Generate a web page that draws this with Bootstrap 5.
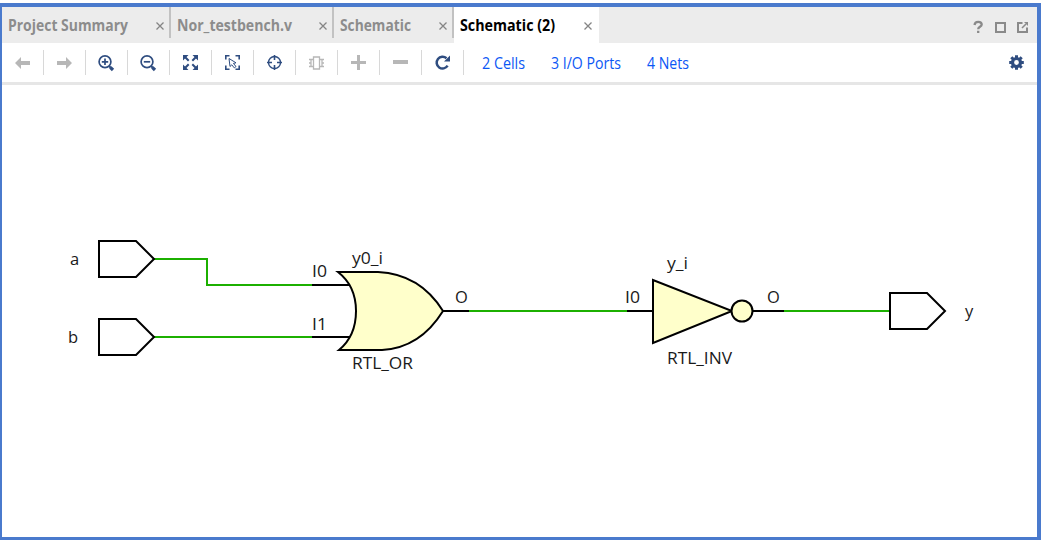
<!DOCTYPE html>
<html lang="en">
<head>
<meta charset="utf-8">
<title>Schematic (2)</title>
<link href="https://cdn.jsdelivr.net/npm/bootstrap@5.3.0/dist/css/bootstrap.min.css" rel="stylesheet">
<style>
body{font-family:"Open Sans","Noto Sans",sans-serif;background:#fff;height:540px;overflow:hidden;padding-top:3px}
.frame{width:1041px;height:537px;border:solid #4a7acd;border-width:4px 4px 3px 2px}
.tabbar{height:36px;background:#ececec}
.doc-tab{height:36px;padding:2px 0 0 6px;font-size:15.5px;font-weight:700;color:#8c8c8c;position:relative;white-space:nowrap}
.doc-tab.sep::after{content:"";position:absolute;right:0;top:0;width:2px;height:31px;background:#c2c2c2}
.doc-tab.current{background:#fff;color:#000}
.tools{height:42px;border-bottom:3px solid #e6e6e6}
.tool{width:42px;height:25px;border-right:1px solid #d8d8d8;padding-right:1px}
.stat{font-size:15.5px;color:#0b57f5;white-space:nowrap;text-decoration:none;padding-top:1px}
.navy{color:#2f4d80}.off{color:#b7b7b7}
svg{display:block;flex:none;overflow:visible}
.canvas text{font-family:"Open Sans","Noto Sans",sans-serif;font-size:16.5px;fill:#1a1a1a}
</style>
</head>
<body>
<div class="frame d-flex flex-column">
  <div class="tabbar d-flex">
    <div class="doc-tab sep d-flex align-items-center" style="width:169px"><svg width="122" height="24"><text x="0" y="17" textLength="120" lengthAdjust="spacingAndGlyphs" fill="currentColor">Project Summary</text></svg><svg class="ms-auto" style="margin-right:7px" width="8" height="8"><path d="M.5.5l7 7m0-7l-7 7" stroke="#858585" stroke-width="1.3"/></svg></div>
    <div class="doc-tab sep d-flex align-items-center" style="width:163px"><svg width="118" height="24"><text x="0" y="17" textLength="115" lengthAdjust="spacingAndGlyphs" fill="currentColor">Nor_testbench.v</text></svg><svg class="ms-auto" style="margin-right:7px" width="8" height="8"><path d="M.5.5l7 7m0-7l-7 7" stroke="#858585" stroke-width="1.3"/></svg></div>
    <div class="doc-tab sep d-flex align-items-center" style="width:120px"><svg width="74" height="24"><text x="0" y="17" textLength="71" lengthAdjust="spacingAndGlyphs" fill="currentColor">Schematic</text></svg><svg class="ms-auto" style="margin-right:7px" width="8" height="8"><path d="M.5.5l7 7m0-7l-7 7" stroke="#858585" stroke-width="1.3"/></svg></div>
    <div class="doc-tab current d-flex align-items-center" style="width:145px"><svg width="98" height="24"><text x="0" y="17" textLength="95" lengthAdjust="spacingAndGlyphs" fill="currentColor">Schematic (2)</text></svg><svg class="ms-auto" style="margin-right:7px" width="8" height="8"><path d="M.5.5l7 7m0-7l-7 7" stroke="#858585" stroke-width="1.3"/></svg></div>
    <svg class="ms-auto" width="66" height="36" fill="none" stroke="#8a8a8a" stroke-width="2"><path d="M3.500 18c.3-2.700 2-3.200 3.700-3.200 2.300 0 3.500 1 3.500 2.700 0 2.300-3.500 2.200-3.500 4.700M7.200 23.700v2.300" stroke-width="2.300"/><path d="M25 16h9v9h-9z"/><path d="M51.500 16H47v9h9v-4.500"/><path d="M51 21l4-4" stroke-width="1.600"/><path d="M53 15h4v4z" fill="#8a8a8a" stroke="none"/></svg>
  </div>
  <div class="tools d-flex align-items-center">
    <div class="tool off d-flex align-items-center justify-content-center"><svg width="15" height="12" fill="currentColor"><path d="M0 6l6-6v4h9v4H6v4z"/></svg></div>
    <div class="tool off d-flex align-items-center justify-content-center"><svg width="15" height="12" fill="currentColor"><path d="M15 6L9 0v4H0v4h9v4z"/></svg></div>
    <div class="tool navy d-flex align-items-center justify-content-center"><svg width="16" height="16" fill="none" stroke="currentColor" stroke-width="1.700"><circle cx="7" cy="6.800" r="5.900"/><path d="M3.800 6.800h6.400M7 3.600v6.400"/><path d="M11 11l1.800 1.800" stroke-width="2"/><path d="M12.300 12.300l2.700 2.700" stroke-width="3.200"/></svg></div>
    <div class="tool navy d-flex align-items-center justify-content-center"><svg width="16" height="16" fill="none" stroke="currentColor" stroke-width="1.700"><circle cx="7" cy="6.800" r="5.900"/><path d="M3.800 6.800h6.400"/><path d="M11 11l1.800 1.800" stroke-width="2"/><path d="M12.300 12.300l2.700 2.700" stroke-width="3.200"/></svg></div>
    <div class="tool navy d-flex align-items-center justify-content-center"><svg width="15" height="15" fill="currentColor" stroke="currentColor"><path stroke="none" d="M0 0h5.500L0 5.500zM15 0v5.500L9.500 0zM0 15V9.500L5.500 15zM15 15H9.500L15 9.500z"/><path d="M2 2l3.700 3.700M13 2L9.300 5.700M2 13l3.700-3.700M13 13L9.300 9.300" stroke-width="2"/></svg></div>
    <div class="tool navy d-flex align-items-center justify-content-center"><svg width="15" height="15" fill="none" stroke="currentColor" stroke-width="1.600"><path d="M.8 4.500V.8h3.700M10.500.8h3.700v3.700M.8 10.500v3.700h3.700M10.500 14.200h3.700v-3.700"/><path d="M4 3.500l7 4.300-2.600.6 2.600 3.100-1.700 1.400-2.500-3.100L5 11.500z" stroke-width="1"/></svg></div>
    <div class="tool navy d-flex align-items-center justify-content-center"><svg width="15" height="15" fill="none" stroke="currentColor" stroke-width="1.400"><circle cx="7.500" cy="7.500" r="6"/><path d="M7.500 0v5M7.500 10v5M0 7.500h5M10 7.500h5" stroke-width="1.600"/></svg></div>
    <div class="tool off d-flex align-items-center justify-content-center"><svg width="15" height="14" fill="none" stroke="currentColor" stroke-width="1.500"><path d="M4.500 1h6v12h-6zM0 3.500h4.500M0 7h2.500M0 10.500h4.500M10.500 3.500H15M12.500 7H15M10.500 10.500H15M2 3.500v7M13 3.500v7" stroke-width="1.300"/></svg></div>
    <div class="tool off d-flex align-items-center justify-content-center"><svg width="15" height="15" stroke="currentColor" stroke-width="3"><path d="M0 7.500h15M7.500 0v15"/></svg></div>
    <div class="tool off d-flex align-items-center justify-content-center"><svg width="15" height="15" stroke="currentColor" stroke-width="4"><path d="M0 7h15"/></svg></div>
    <div class="tool navy d-flex align-items-center justify-content-center"><svg width="15" height="15" fill="none" stroke="currentColor" stroke-width="2.500"><path d="M11.500 3.200A5.900 5.900 0 1 0 12.600 10.700"/><path fill="currentColor" stroke="none" d="M15 .5v6H9z"/></svg></div>
    <a class="stat" style="margin-left:18px"><svg width="44" height="24"><text x="0" y="17.500" textLength="43" lengthAdjust="spacingAndGlyphs" fill="currentColor">2 Cells</text></svg></a>
    <a class="stat" style="margin-left:25px"><svg width="72" height="24"><text x="0" y="17.500" textLength="70" lengthAdjust="spacingAndGlyphs" fill="currentColor">3 I/O Ports</text></svg></a>
    <a class="stat" style="margin-left:24px"><svg width="44" height="24"><text x="0" y="17.500" textLength="42" lengthAdjust="spacingAndGlyphs" fill="currentColor">4 Nets</text></svg></a>
    <svg class="ms-auto navy" style="margin-right:13px" width="15" height="15" viewBox="-7.500 -7.500 15 15" fill="none" stroke="currentColor"><circle r="4" stroke-width="3.200"/><path d="M0-7.300v3M0 7.300v-3M-7.300 0h3M7.300 0h-3M-5.200-5.200l2 2M5.200 5.200l-2-2M-5.200 5.200l2-2M5.200-5.200l-2 2" stroke-width="3"/></svg>
  </div>
  <svg class="canvas" width="1035" height="452" viewBox="2 85 1035 452" fill="none" stroke-width="2">
    <g stroke="#1cb000"><path d="M154 259h53v26h106M154 337h159M468 311h160M783 311h107"/></g>
    <g stroke="#000">
      <path d="M99 241h37l18 18-18 18H99zM99 319h37l18 18-18 18H99zM890 293h37l18 18-18 18h-37z"/>
      <path fill="#ffffcb" d="M338 272H378Q420 274 443 311Q420 348 382 350H339Q356 336 356 311Q356 286 338 272z"/>
      <path d="M312 285h38M312 337h38M443 311h26M627 311h26M753 311h31"/>
      <path fill="#ffffcb" d="M653 280v63l79-32z"/><circle cx="742" cy="311" r="10.500" fill="#ffffcb"/>
    </g>
    <g>
      <text x="70" y="265">a</text><text x="68" y="343">b</text><text x="965" y="317">y</text>
      <text x="352" y="264" textLength="31" lengthAdjust="spacingAndGlyphs">y0_i</text>
      <text x="312" y="277" textLength="15" lengthAdjust="spacingAndGlyphs">I0</text><text x="312" y="330" textLength="15" lengthAdjust="spacingAndGlyphs">I1</text>
      <text x="455" y="303">O</text><text x="352" y="369" textLength="61" lengthAdjust="spacingAndGlyphs">RTL_OR</text>
      <text x="667" y="269" textLength="21" lengthAdjust="spacingAndGlyphs">y_i</text><text x="625" y="303" textLength="15" lengthAdjust="spacingAndGlyphs">I0</text>
      <text x="767" y="303">O</text><text x="667" y="364" textLength="65" lengthAdjust="spacingAndGlyphs">RTL_INV</text>
    </g>
  </svg>
</div>
<script src="https://cdn.jsdelivr.net/npm/bootstrap@5.3.0/dist/js/bootstrap.bundle.min.js"></script>
</body>
</html>
